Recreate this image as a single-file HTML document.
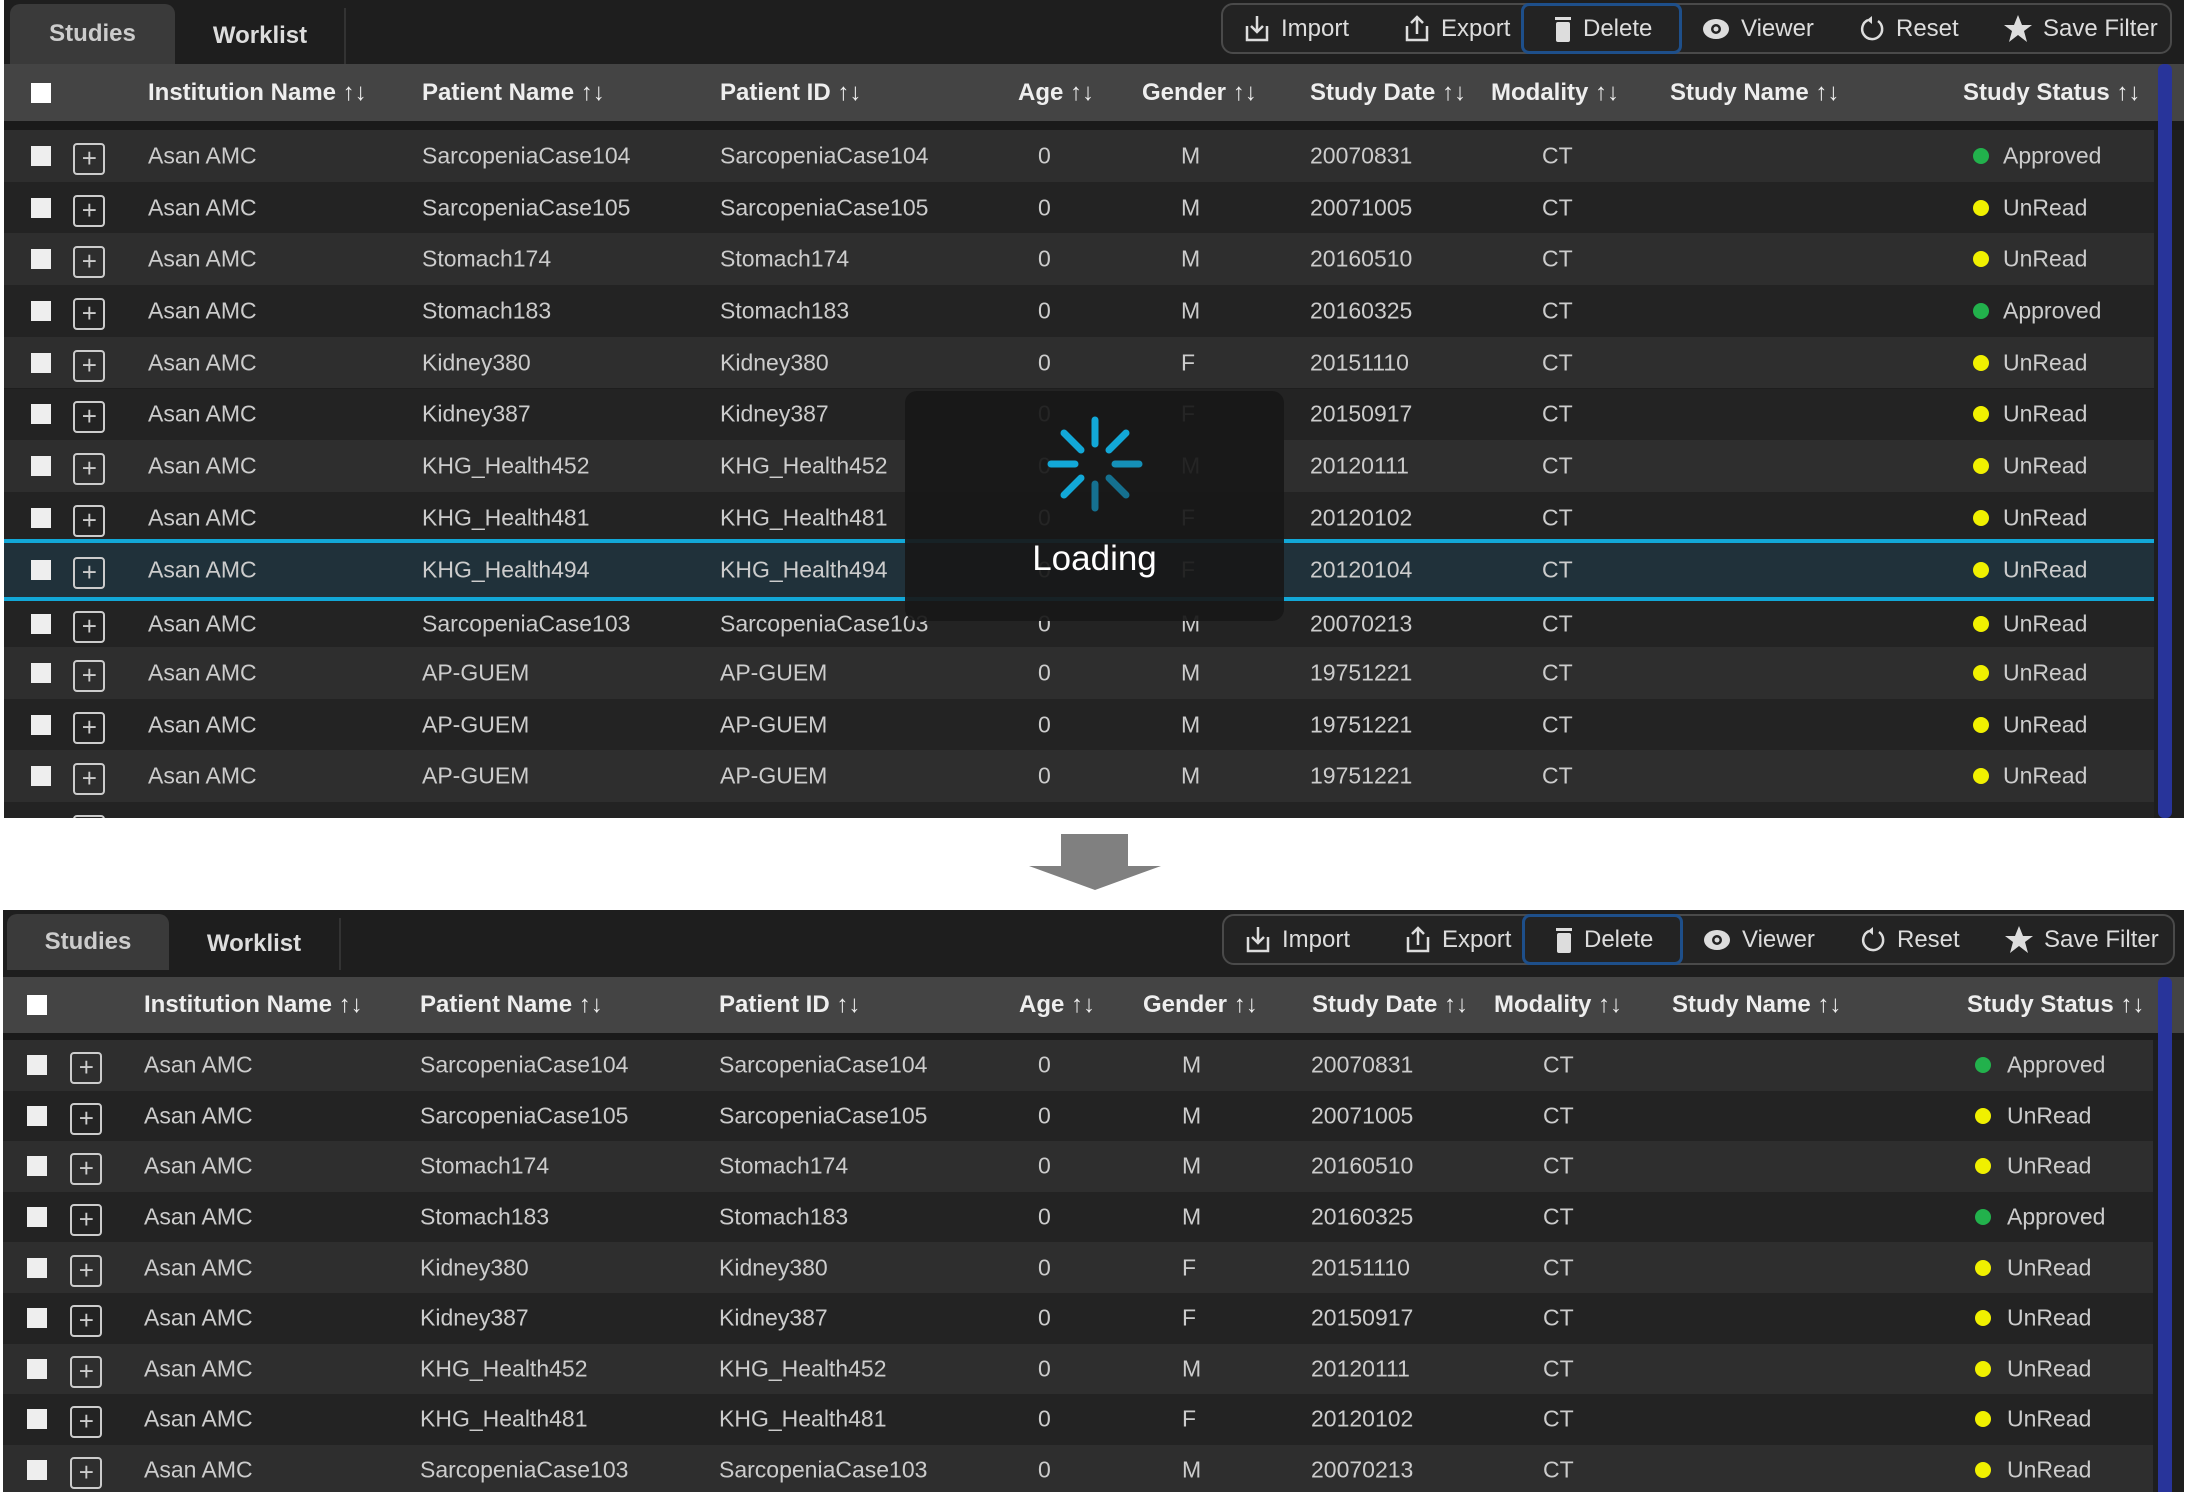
<!DOCTYPE html>
<html><head><meta charset="utf-8"><style>
*{margin:0;padding:0;box-sizing:border-box}
body{width:2189px;height:1492px;background:#fff;position:relative;overflow:hidden;font-family:"Liberation Sans",sans-serif}
.panel{position:absolute;background:#1e1e1e;overflow:hidden}
.tab{position:absolute;color:#ddd;font-weight:bold;font-size:24px;display:flex;align-items:center;justify-content:center}
.tb{position:absolute;border:2px solid #4a4a4a;border-radius:12px;background:#232323}
.ti{position:absolute;color:#ddd;font-size:24px;display:flex;align-items:center;gap:10px;height:100%}
.hdr{position:absolute;left:0;right:0;background:#444}
.hdr span{position:absolute;top:50%;transform:translateY(-50%);color:#eee;font-weight:bold;font-size:24px;white-space:nowrap}
.row{position:absolute;left:0;right:0}
.row span{position:absolute;top:50%;transform:translateY(-50%);color:#ccc;font-size:23px;white-space:nowrap}
.a{background:#2e2e2e}.d{background:#232323}
.cb{width:20px;height:20px;background:#eee;position:absolute;top:50%;margin-top:-10px}
.pl{width:32px;height:32px;border:2px solid #ccc;border-radius:4px;position:absolute;top:50%;margin-top:-13px;color:#ccc;font-size:26px;line-height:26px;text-align:center}
.dot{width:16px;height:16px;border-radius:50%;position:absolute;top:50%;margin-top:-8px}
.g{background:#22b14c}.y{background:#f0f000}
.sb{position:absolute;width:14px;background:#28349a;border-radius:6px}
</style></head><body>

<!-- TOP PANEL -->
<div class="panel" style="left:4px;top:0;width:2180px;height:818px">
 <div class="tab" style="left:6px;top:4px;width:165px;height:60px;background:#3a3a3a;border-radius:10px 10px 0 0;color:#ccc">Studies</div>
 <div class="tab" style="left:172px;top:8px;width:170px;height:56px;border-right:2px solid #333">Worklist</div>
 <div class="tb" style="left:1217px;top:3px;width:951px;height:51px">
  <div class="ti" style="left:20px"><svg width="28" height="30" viewBox="0 0 28 30"><path d="M14 2v16M8 12l6 6 6-6M4 12v14h20V12" fill="none" stroke="#ddd" stroke-width="2.5"/></svg>Import</div>
  <div class="ti" style="left:180px"><svg width="28" height="30" viewBox="0 0 28 30"><path d="M14 20V3M8 9l6-6 6 6M4 12v14h20V12" fill="none" stroke="#ddd" stroke-width="2.5"/></svg>Export</div>
  <div style="position:absolute;left:298px;top:-2px;width:161px;height:51px;border:3px solid #1e4f8a;border-radius:8px"></div>
  <div class="ti" style="left:330px"><svg width="20" height="28" viewBox="0 0 20 28"><rect x="2" y="2" width="16" height="3" fill="#ddd"/><rect x="3" y="7" width="14" height="20" rx="2" fill="#ddd"/></svg>Delete</div>
  <div class="ti" style="left:478px"><svg width="30" height="24" viewBox="0 0 30 24"><ellipse cx="15" cy="12" rx="13" ry="10" fill="#ddd"/><circle cx="15" cy="12" r="5" fill="#232323"/><circle cx="15" cy="12" r="2.5" fill="#ddd"/></svg>Viewer</div>
  <div class="ti" style="left:635px"><svg width="28" height="30" viewBox="0 0 28 30"><path d="M10 6A10 10 0 1 0 20 7" fill="none" stroke="#ddd" stroke-width="2.5"/><path d="M14 2l-5 4 5 4z" fill="#ddd"/></svg>Reset</div>
  <div class="ti" style="left:780px"><svg width="30" height="30" viewBox="0 0 30 30"><path d="M15 1l4 10h10l-8 6 3 11-9-7-9 7 3-11-8-6h10z" fill="#ddd"/></svg>Save Filter</div>
 </div>
 <div class="hdr" style="top:64px;height:57px">
  <div class="cb" style="left:27px;background:#fff"></div>
  <span style="left:144px">Institution Name ↑↓</span>
  <span style="left:418px">Patient Name ↑↓</span>
  <span style="left:716px">Patient ID ↑↓</span>
  <span style="left:1014px">Age ↑↓</span>
  <span style="left:1138px">Gender ↑↓</span>
  <span style="left:1306px">Study Date ↑↓</span>
  <span style="left:1487px">Modality ↑↓</span>
  <span style="left:1666px">Study Name ↑↓</span>
  <span style="left:1959px">Study Status ↑↓</span>
 </div>
 <div style="position:absolute;left:0;right:0;top:121px;height:9px;background:#1a1a1a"></div>
 <div class="sb" style="left:2154px;top:64px;height:754px"></div>
 <div id="top-rows"></div>
</div>

<!-- ARROW -->
<svg style="position:absolute;left:1028px;top:834px" width="134" height="58" viewBox="0 0 134 58"><path d="M33 0h67v32h33L67 56 1 32h32z" fill="#808080"/></svg>

<!-- BOTTOM PANEL -->
<div class="panel" style="left:3px;top:910px;width:2181px;height:582px">
 <div class="tab" style="left:4px;top:4px;width:162px;height:56px;background:#3a3a3a;border-radius:10px 10px 0 0;color:#ccc">Studies</div>
 <div class="tab" style="left:166px;top:8px;width:172px;height:52px;border-right:2px solid #333">Worklist</div>
 <div class="tb" style="left:1219px;top:4px;width:953px;height:51px">
  <div class="ti" style="left:20px"><svg width="28" height="30" viewBox="0 0 28 30"><path d="M14 2v16M8 12l6 6 6-6M4 12v14h20V12" fill="none" stroke="#ddd" stroke-width="2.5"/></svg>Import</div>
  <div class="ti" style="left:180px"><svg width="28" height="30" viewBox="0 0 28 30"><path d="M14 20V3M8 9l6-6 6 6M4 12v14h20V12" fill="none" stroke="#ddd" stroke-width="2.5"/></svg>Export</div>
  <div style="position:absolute;left:298px;top:-2px;width:161px;height:51px;border:3px solid #1e4f8a;border-radius:8px"></div>
  <div class="ti" style="left:330px"><svg width="20" height="28" viewBox="0 0 20 28"><rect x="2" y="2" width="16" height="3" fill="#ddd"/><rect x="3" y="7" width="14" height="20" rx="2" fill="#ddd"/></svg>Delete</div>
  <div class="ti" style="left:478px"><svg width="30" height="24" viewBox="0 0 30 24"><ellipse cx="15" cy="12" rx="13" ry="10" fill="#ddd"/><circle cx="15" cy="12" r="5" fill="#232323"/><circle cx="15" cy="12" r="2.5" fill="#ddd"/></svg>Viewer</div>
  <div class="ti" style="left:635px"><svg width="28" height="30" viewBox="0 0 28 30"><path d="M10 6A10 10 0 1 0 20 7" fill="none" stroke="#ddd" stroke-width="2.5"/><path d="M14 2l-5 4 5 4z" fill="#ddd"/></svg>Reset</div>
  <div class="ti" style="left:780px"><svg width="30" height="30" viewBox="0 0 30 30"><path d="M15 1l4 10h10l-8 6 3 11-9-7-9 7 3-11-8-6h10z" fill="#ddd"/></svg>Save Filter</div>
 </div>
 <div class="hdr" style="top:67px;height:56px">
  <div class="cb" style="left:24px;background:#fff"></div>
  <span style="left:141px">Institution Name ↑↓</span>
  <span style="left:417px">Patient Name ↑↓</span>
  <span style="left:716px">Patient ID ↑↓</span>
  <span style="left:1016px">Age ↑↓</span>
  <span style="left:1140px">Gender ↑↓</span>
  <span style="left:1309px">Study Date ↑↓</span>
  <span style="left:1491px">Modality ↑↓</span>
  <span style="left:1669px">Study Name ↑↓</span>
  <span style="left:1964px">Study Status ↑↓</span>
 </div>
 <div style="position:absolute;left:0;right:0;top:123px;height:7px;background:#1a1a1a"></div>
 <div class="sb" style="left:2155px;top:67px;height:520px"></div>
</div>

<style>
.T .c1{left:27px}.T .c2{left:69px}.T .c3{left:144px}.T .c4{left:418px}.T .c5{left:716px}.T .c6{left:1034px}.T .c7{left:1177px}.T .c8{left:1306px}.T .c9{left:1538px}.T .c10{left:1969px}.T .c11{left:1999px}
.B .c1{left:24px}.B .c2{left:67px}.B .c3{left:141px}.B .c4{left:417px}.B .c5{left:716px}.B .c6{left:1035px}.B .c7{left:1179px}.B .c8{left:1308px}.B .c9{left:1540px}.B .c10{left:1972px}.B .c11{left:2004px}
</style>

<div class="T" style="position:absolute;left:4px;top:130px;width:2150px;height:688px;overflow:hidden">
 <div class="row a" style="top:0;height:51.7px"><i class="cb c1"></i><i class="pl c2">+</i><span class="c3">Asan AMC</span><span class="c4">SarcopeniaCase104</span><span class="c5">SarcopeniaCase104</span><span class="c6">0</span><span class="c7">M</span><span class="c8">20070831</span><span class="c9">CT</span><i class="dot g c10"></i><span class="c11">Approved</span></div>
 <div class="row d" style="top:51.7px;height:51.7px"><i class="cb c1"></i><i class="pl c2">+</i><span class="c3">Asan AMC</span><span class="c4">SarcopeniaCase105</span><span class="c5">SarcopeniaCase105</span><span class="c6">0</span><span class="c7">M</span><span class="c8">20071005</span><span class="c9">CT</span><i class="dot y c10"></i><span class="c11">UnRead</span></div>
 <div class="row a" style="top:103.4px;height:51.7px"><i class="cb c1"></i><i class="pl c2">+</i><span class="c3">Asan AMC</span><span class="c4">Stomach174</span><span class="c5">Stomach174</span><span class="c6">0</span><span class="c7">M</span><span class="c8">20160510</span><span class="c9">CT</span><i class="dot y c10"></i><span class="c11">UnRead</span></div>
 <div class="row d" style="top:155.1px;height:51.7px"><i class="cb c1"></i><i class="pl c2">+</i><span class="c3">Asan AMC</span><span class="c4">Stomach183</span><span class="c5">Stomach183</span><span class="c6">0</span><span class="c7">M</span><span class="c8">20160325</span><span class="c9">CT</span><i class="dot g c10"></i><span class="c11">Approved</span></div>
 <div class="row a" style="top:206.8px;height:51.7px"><i class="cb c1"></i><i class="pl c2">+</i><span class="c3">Asan AMC</span><span class="c4">Kidney380</span><span class="c5">Kidney380</span><span class="c6">0</span><span class="c7">F</span><span class="c8">20151110</span><span class="c9">CT</span><i class="dot y c10"></i><span class="c11">UnRead</span></div>
 <div class="row d" style="top:258.5px;height:51.7px"><i class="cb c1"></i><i class="pl c2">+</i><span class="c3">Asan AMC</span><span class="c4">Kidney387</span><span class="c5">Kidney387</span><span class="c6">0</span><span class="c7">F</span><span class="c8">20150917</span><span class="c9">CT</span><i class="dot y c10"></i><span class="c11">UnRead</span></div>
 <div class="row a" style="top:310.2px;height:51.7px"><i class="cb c1"></i><i class="pl c2">+</i><span class="c3">Asan AMC</span><span class="c4">KHG_Health452</span><span class="c5">KHG_Health452</span><span class="c6">0</span><span class="c7">M</span><span class="c8">20120111</span><span class="c9">CT</span><i class="dot y c10"></i><span class="c11">UnRead</span></div>
 <div class="row d" style="top:361.9px;height:51.7px"><i class="cb c1"></i><i class="pl c2">+</i><span class="c3">Asan AMC</span><span class="c4">KHG_Health481</span><span class="c5">KHG_Health481</span><span class="c6">0</span><span class="c7">F</span><span class="c8">20120102</span><span class="c9">CT</span><i class="dot y c10"></i><span class="c11">UnRead</span></div>
 <div class="row" style="top:409px;height:62px;background:#20313a;border-top:4px solid #12a8d8;border-bottom:4px solid #12a8d8"><i class="cb c1"></i><i class="pl c2">+</i><span class="c3">Asan AMC</span><span class="c4">KHG_Health494</span><span class="c5">KHG_Health494</span><span class="c6">0</span><span class="c7">F</span><span class="c8">20120104</span><span class="c9">CT</span><i class="dot y c10"></i><span class="c11">UnRead</span></div>
 <div class="row d" style="top:471px;height:46px"><i class="cb c1"></i><i class="pl c2">+</i><span class="c3">Asan AMC</span><span class="c4">SarcopeniaCase103</span><span class="c5">SarcopeniaCase103</span><span class="c6">0</span><span class="c7">M</span><span class="c8">20070213</span><span class="c9">CT</span><i class="dot y c10"></i><span class="c11">UnRead</span></div>
 <div class="row a" style="top:517px;height:51.7px"><i class="cb c1"></i><i class="pl c2">+</i><span class="c3">Asan AMC</span><span class="c4">AP-GUEM</span><span class="c5">AP-GUEM</span><span class="c6">0</span><span class="c7">M</span><span class="c8">19751221</span><span class="c9">CT</span><i class="dot y c10"></i><span class="c11">UnRead</span></div>
 <div class="row d" style="top:568.7px;height:51.7px"><i class="cb c1"></i><i class="pl c2">+</i><span class="c3">Asan AMC</span><span class="c4">AP-GUEM</span><span class="c5">AP-GUEM</span><span class="c6">0</span><span class="c7">M</span><span class="c8">19751221</span><span class="c9">CT</span><i class="dot y c10"></i><span class="c11">UnRead</span></div>
 <div class="row a" style="top:620.4px;height:51.7px"><i class="cb c1"></i><i class="pl c2">+</i><span class="c3">Asan AMC</span><span class="c4">AP-GUEM</span><span class="c5">AP-GUEM</span><span class="c6">0</span><span class="c7">M</span><span class="c8">19751221</span><span class="c9">CT</span><i class="dot y c10"></i><span class="c11">UnRead</span></div>
 <div class="row d" style="top:672px;height:51.7px"><i class="cb c1"></i><i class="pl c2">+</i><span class="c3">Asan AMC</span><span class="c4">SarcopeniaCase10</span><span class="c5">SarcopeniaCase10</span><span class="c6">0</span><span class="c7">M</span><span class="c8">20070000</span><span class="c9">CT</span><i class="dot y c10"></i><span class="c11">UnRead</span></div>
</div>

<!-- Loading overlay -->
<div style="position:absolute;left:905px;top:391px;width:379px;height:230px;background:rgba(24,24,24,0.93);border-radius:12px">
 <svg style="position:absolute;left:135px;top:18px" width="110" height="110" viewBox="-55 -55 110 110">
  <g stroke-width="7" stroke-linecap="round">
   <line x1="0" y1="-20" x2="0" y2="-44" stroke="#12a8d8"/>
   <line x1="14" y1="-14" x2="31" y2="-31" stroke="#12a8d8"/>
   <line x1="20" y1="0" x2="44" y2="0" stroke="#1590b8"/>
   <line x1="14" y1="14" x2="31" y2="31" stroke="#15708f"/>
   <line x1="0" y1="20" x2="0" y2="44" stroke="#157090"/>
   <line x1="-14" y1="14" x2="-31" y2="31" stroke="#12a8d8"/>
   <line x1="-20" y1="0" x2="-44" y2="0" stroke="#12a8d8"/>
   <line x1="-14" y1="-14" x2="-31" y2="-31" stroke="#12a8d8"/>
  </g>
 </svg>
 <div style="position:absolute;left:0;right:0;top:148px;text-align:center;color:#fff;font-size:35px">Loading</div>
</div>

<div class="B" style="position:absolute;left:3px;top:1040px;width:2150px;height:452px;overflow:hidden">
 <div class="row a" style="top:0;height:50.6px"><i class="cb c1"></i><i class="pl c2">+</i><span class="c3">Asan AMC</span><span class="c4">SarcopeniaCase104</span><span class="c5">SarcopeniaCase104</span><span class="c6">0</span><span class="c7">M</span><span class="c8">20070831</span><span class="c9">CT</span><i class="dot g c10"></i><span class="c11">Approved</span></div>
 <div class="row d" style="top:50.6px;height:50.6px"><i class="cb c1"></i><i class="pl c2">+</i><span class="c3">Asan AMC</span><span class="c4">SarcopeniaCase105</span><span class="c5">SarcopeniaCase105</span><span class="c6">0</span><span class="c7">M</span><span class="c8">20071005</span><span class="c9">CT</span><i class="dot y c10"></i><span class="c11">UnRead</span></div>
 <div class="row a" style="top:101.2px;height:50.6px"><i class="cb c1"></i><i class="pl c2">+</i><span class="c3">Asan AMC</span><span class="c4">Stomach174</span><span class="c5">Stomach174</span><span class="c6">0</span><span class="c7">M</span><span class="c8">20160510</span><span class="c9">CT</span><i class="dot y c10"></i><span class="c11">UnRead</span></div>
 <div class="row d" style="top:151.8px;height:50.6px"><i class="cb c1"></i><i class="pl c2">+</i><span class="c3">Asan AMC</span><span class="c4">Stomach183</span><span class="c5">Stomach183</span><span class="c6">0</span><span class="c7">M</span><span class="c8">20160325</span><span class="c9">CT</span><i class="dot g c10"></i><span class="c11">Approved</span></div>
 <div class="row a" style="top:202.4px;height:50.6px"><i class="cb c1"></i><i class="pl c2">+</i><span class="c3">Asan AMC</span><span class="c4">Kidney380</span><span class="c5">Kidney380</span><span class="c6">0</span><span class="c7">F</span><span class="c8">20151110</span><span class="c9">CT</span><i class="dot y c10"></i><span class="c11">UnRead</span></div>
 <div class="row d" style="top:253px;height:50.6px"><i class="cb c1"></i><i class="pl c2">+</i><span class="c3">Asan AMC</span><span class="c4">Kidney387</span><span class="c5">Kidney387</span><span class="c6">0</span><span class="c7">F</span><span class="c8">20150917</span><span class="c9">CT</span><i class="dot y c10"></i><span class="c11">UnRead</span></div>
 <div class="row a" style="top:303.6px;height:50.6px"><i class="cb c1"></i><i class="pl c2">+</i><span class="c3">Asan AMC</span><span class="c4">KHG_Health452</span><span class="c5">KHG_Health452</span><span class="c6">0</span><span class="c7">M</span><span class="c8">20120111</span><span class="c9">CT</span><i class="dot y c10"></i><span class="c11">UnRead</span></div>
 <div class="row d" style="top:354.2px;height:50.6px"><i class="cb c1"></i><i class="pl c2">+</i><span class="c3">Asan AMC</span><span class="c4">KHG_Health481</span><span class="c5">KHG_Health481</span><span class="c6">0</span><span class="c7">F</span><span class="c8">20120102</span><span class="c9">CT</span><i class="dot y c10"></i><span class="c11">UnRead</span></div>
 <div class="row a" style="top:404.8px;height:50.6px"><i class="cb c1"></i><i class="pl c2">+</i><span class="c3">Asan AMC</span><span class="c4">SarcopeniaCase103</span><span class="c5">SarcopeniaCase103</span><span class="c6">0</span><span class="c7">M</span><span class="c8">20070213</span><span class="c9">CT</span><i class="dot y c10"></i><span class="c11">UnRead</span></div>
</div>
</body></html>
